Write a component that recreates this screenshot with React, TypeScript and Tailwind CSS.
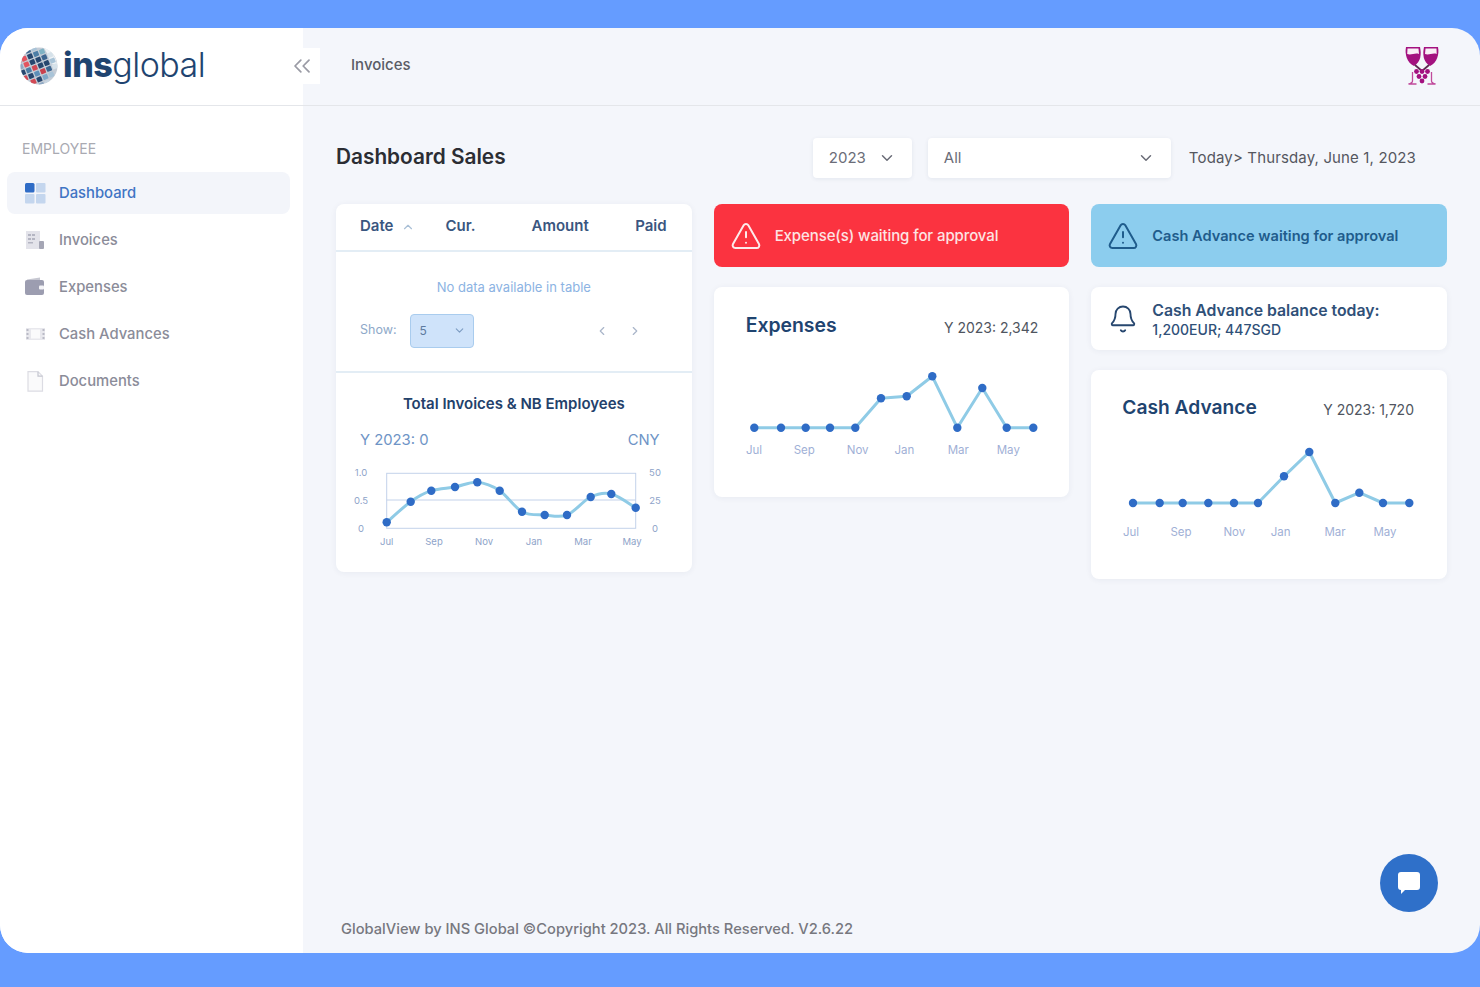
import { ChevronDown, ChevronLeft, ChevronRight, ChevronUp, ChevronsLeft, TriangleAlert, Bell } from "lucide-react";

type Pt = [number, number];
type Label = [string, number];

function smoothPath(pts: Pt[]) {
  let d = `M${pts[0][0]} ${pts[0][1]}`;
  for (let i = 0; i < pts.length - 1; i++) {
    const p0 = pts[i - 1] ?? pts[i];
    const p1 = pts[i];
    const p2 = pts[i + 1];
    const p3 = pts[i + 2] ?? p2;
    const c1x = p1[0] + (p2[0] - p0[0]) / 6;
    const c1y = p1[1] + (p2[1] - p0[1]) / 6;
    const c2x = p2[0] - (p3[0] - p1[0]) / 6;
    const c2y = p2[1] - (p3[1] - p1[1]) / 6;
    d += ` C${c1x} ${c1y} ${c2x} ${c2y} ${p2[0]} ${p2[1]}`;
  }
  return d;
}

const invoicePts: Pt[] = [[50.7, 67.3], [74.7, 46.7], [95.3, 35.7], [119, 32], [141.3, 27.3], [163.7, 35.7], [186, 56.7], [208.7, 60], [231, 60], [254.7, 42], [275.3, 39], [299.7, 52.7]];
const expensePts: Pt[] = [[40.3, 67.7], [67, 67.7], [91.7, 67.7], [116, 67.7], [141.3, 67.7], [167, 38.3], [192.7, 36.3], [218.3, 16.3], [243.3, 67.7], [268.3, 28], [292.7, 67.7], [319.3, 67.7]];
const cashPts: Pt[] = [[42, 63], [68.7, 63], [91.7, 63], [117.3, 63], [143, 63], [167, 63], [193, 36.3], [218.3, 12], [244.3, 63], [268.3, 52.7], [292, 63], [318.3, 63]];

function LineChart({ pts, labels, labelY }: { pts: Pt[]; labels: Label[]; labelY: number }) {
  return (
    <svg width="355" height="110" className="block">
      <polyline points={pts.map((p) => p.join(",")).join(" ")} fill="none" stroke="#8fcbe6" strokeWidth="3" strokeLinejoin="round" />
      {pts.map((p, i) => (
        <circle key={i} cx={p[0]} cy={p[1]} r="4.2" fill="#2f6cc6" />
      ))}
      {labels.map(([t, x]) => (
        <text key={t} x={x} y={labelY + 4} textAnchor="middle" fontSize="11.5" fill="#9fb0d6">{t}</text>
      ))}
    </svg>
  );
}

function InvoiceChart() {
  const left: [string, number][] = [["1.0", 17.3], ["0.5", 45.3], ["0", 73.3]];
  const right: [string, number][] = [["50", 17.3], ["25", 45.3], ["0", 73.3]];
  const bottom: Label[] = [["Jul", 50.7], ["Sep", 98], ["Nov", 148], ["Jan", 198], ["Mar", 247], ["May", 296]];
  return (
    <svg width="355" height="100" className="block">
      <rect x="50.7" y="18.3" width="249" height="55" fill="none" stroke="#c3d2ea" strokeWidth="1" />
      <line x1="50.7" y1="45" x2="299.7" y2="45" stroke="#c3d2ea" strokeWidth="1" />
      <path d={smoothPath(invoicePts)} fill="none" stroke="#8fcbe6" strokeWidth="3" />
      {invoicePts.map((p, i) => (
        <circle key={i} cx={p[0]} cy={p[1]} r="4.2" fill="#2f6cc6" />
      ))}
      {left.map(([t, y]) => (
        <text key={t} x="25" y={y + 3.5} textAnchor="middle" fontSize="9.5" fill="#8ea3c9">{t}</text>
      ))}
      {right.map(([t, y]) => (
        <text key={t} x="319" y={y + 3.5} textAnchor="middle" fontSize="9.5" fill="#8ea3c9">{t}</text>
      ))}
      {bottom.map(([t, x]) => (
        <text key={t} x={x} y="89.5" textAnchor="middle" fontSize="9.5" fill="#8ea3c9">{t}</text>
      ))}
    </svg>
  );
}

function Globe() {
  // tilted grid of tiles, row by row
  const rows: string[][] = [
    ["", "#d8606a", "#3d6690", "#a9c4d8", ""],
    ["#d24a55", "#e3545f", "#27476f", "#4d7ea6", "#7fb2c4"],
    ["#8fa9c4", "#e3545f", "#27476f", "#27476f", "#3d6690", "#d6e2ea"],
    ["#27476f", "#4d7ea6", "#d24a55", "#27476f", "#27476f", "#a9c4d8"],
    ["#d24a55", "#27476f", "#5d8fb8", "#c9414e", "#3d6690", "#d6e2ea"],
    ["#a9c4d8", "#d24a55", "#27476f", "#7fa8c8", "#a9c4d8", ""],
    ["", "#5d8fb8", "#8fa9c4", "#c9d6e2", "", ""],
  ];
  return (
    <svg width="38" height="38" viewBox="0 0 38 38" className="shrink-0">
      <defs>
        <clipPath id="globe-clip"><circle cx="19" cy="19" r="18.500" /></clipPath>
      </defs>
      <circle cx="19" cy="19" r="18.500" fill="#c4ccd6" />
      <path d="M24 1a18.500 18.500 0 0 1 13 17l-6-1-3-9Z" fill="#eef2f5" />
      <g clipPath="url(#globe-clip)">
        <g transform="rotate(-22 19 19)">
          {rows.map((row, r) =>
            row.map((c, i) =>
              c ? <rect key={`${r}-${i}`} x={-1 + i * 6.4} y={-2 + r * 6.2} width="5.200" height="5" rx="0.800" fill={c} /> : null
            )
          )}
        </g>
      </g>
    </svg>
  );
}

function WineIcon() {
  return (
    <svg width="36" height="39" viewBox="0 0 36 39" fill="none">
      <path d="M2 1h14c1.500 7 1 15-6 19C3 17 .5 8 2 1Z" fill="#a3117f" />
      <path d="M20 1h14c1.500 7-1 16-8 19-7-4-7.500-12-6-19Z" fill="#a3117f" />
      <path d="M3.500 2.500h11l.5 5.500c-4-1.500-8 1.500-11.800 0ZM21.500 2.500h11l.2 5.500c-4-1.500-8 1.500-11.700 0Z" fill="#f9eef6" />
      <path d="M11 19l7 6M25 19l-7 6" stroke="#5d2b52" strokeWidth="1.800" />
      <g fill="#a3117f">
        <circle cx="12.500" cy="25.500" r="2.400" /><circle cx="18" cy="25.500" r="2.400" /><circle cx="23.500" cy="25.500" r="2.400" />
        <circle cx="15" cy="30.500" r="2.400" /><circle cx="21" cy="30.500" r="2.400" /><circle cx="18" cy="35" r="2.400" />
      </g>
      <path d="M8.500 26v9c0 2-2 2.500-4 3h8M27.500 26v9c0 2 2 2.500 4 3h-8" stroke="#c04a9b" strokeWidth="1.300" />
    </svg>
  );
}

const menuIcons = {
  dashboard: (
    <svg width="21" height="21" viewBox="0 0 21 21">
      <rect width="9.500" height="9.500" rx="1.500" fill="#2f6cc6" />
      <rect x="11" width="9.500" height="9.500" rx="1" fill="#c4d6ee" />
      <rect y="11" width="9.500" height="9.500" rx="1" fill="#c4d6ee" />
      <rect x="11" y="11" width="9.500" height="9.500" rx="1" fill="#c4d6ee" />
    </svg>
  ),
  invoices: (
    <svg width="21" height="21" viewBox="0 0 21 21">
      <rect x="1" y="1" width="14" height="18" fill="#e3e3ea" />
      <path d="M3 4h3v2H3zM7 4h3v2H7zM3 8h3v2H3zM7 8h3v2H7zM3 12h5v1.500H3z" fill="#b4b5c2" />
      <rect x="14" y="11" width="5" height="8" rx="1" fill="#a5a6b5" />
    </svg>
  ),
  expenses: (
    <svg width="21" height="21" viewBox="0 0 21 21">
      <path d="M2 2.500 15 0.500v3H2Z" fill="#c6c7d1" />
      <rect y="3" width="19" height="15" rx="2" fill="#9c9db0" />
      <rect x="14" y="8.500" width="5" height="4" rx="1" fill="#f4f4f7" />
    </svg>
  ),
  cash: (
    <svg width="21" height="21" viewBox="0 0 21 21">
      <rect x="1" y="4" width="19" height="12" fill="#e8e8ed" />
      <rect x="6" y="5.500" width="9" height="9" fill="#fafafb" />
      <path d="M1.500 5h2v2h-2zM17.500 5h2v2h-2zM1.500 13h2v2h-2zM17.500 13h2v2h-2zM1.500 9h2v2h-2zM17.500 9h2v2h-2z" fill="#b9bac6" />
    </svg>
  ),
  documents: (
    <svg width="21" height="21" viewBox="0 0 21 21" fill="none">
      <path d="M3 .7h10l4.500 4.500v15H3Z" fill="#fafafb" stroke="#dcdce3" strokeWidth="1.200" />
      <path d="M13 .7v4.500h4.500" stroke="#c4c5cf" strokeWidth="1.200" />
    </svg>
  ),
};

function MenuItem({ icon, label, active }: { icon: React.ReactNode; label: string; active?: boolean }) {
  return (
    <div className={active ? "flex h-[42px] items-center gap-[13px] rounded-lg bg-[#f3f5fa] pl-[18px]" : "flex h-[42px] items-center gap-[13px] pl-[18px]"}>
      <span className="flex w-[21px] items-center justify-center">{icon}</span>
      <span className={active ? "text-[14.8px] font-medium text-[#3f74c4]" : "text-[14.8px] font-medium text-[#8b8c99]"}>{label}</span>
    </div>
  );
}

function Select({ label, width }: { label: string; width: string }) {
  return (
    <div className={`flex h-10 items-center justify-between rounded bg-white pl-[16px] pr-[16px] shadow-[0_1px_4px_rgba(30,50,90,0.08)] ${width}`}>
      <span className="text-[15px] text-[#6b6d78]">{label}</span>
      <ChevronDown size={18} className="text-[#6b6d78]" />
    </div>
  );
}

export default function App() {
  return (
    <div className="h-[987px] overflow-hidden bg-[#659cff] py-[28px] font-['Inter',sans-serif]">
      <div className="relative flex h-[925px] flex-col overflow-hidden rounded-[28px] bg-[#f4f6fb]">
        {/* top bar */}
        <div className="flex h-[78px] shrink-0 items-center border-b border-[#e4e6ea]">
          <div className="flex h-full w-[303px] items-center bg-white pb-[2px] pl-[20px]">
            <Globe />
            <div className="ml-[5px] pb-[2px] text-[34px] leading-none tracking-[-0.5px] text-[#1f4470]">
              <span className="font-extrabold">ins</span>
              <span className="font-light">global</span>
            </div>
          </div>
          <div className="-ml-[20px] mb-[2px] flex h-[36px] w-[37px] items-center justify-center bg-white">
            <ChevronsLeft size={28} strokeWidth={1.5} className="text-[#9a9ba5]" />
          </div>
          <span className="mb-[2px] ml-[31px] text-[15px] font-medium text-[#5a5c66]">Invoices</span>
          <div className="mb-[2px] ml-auto mr-[40px]">
            <WineIcon />
          </div>
        </div>

        <div className="flex min-h-0 flex-1">
          {/* sidebar */}
          <div className="w-[303px] shrink-0 bg-white pl-[7px] pr-[13px] pt-[34px]">
            <div className="pl-[15px] text-[14px] leading-[17px] text-[#a9aab2]">EMPLOYEE</div>
            <div className="mt-[15px] flex flex-col gap-[5px]">
              <MenuItem icon={menuIcons.dashboard} label="Dashboard" active />
              <MenuItem icon={menuIcons.invoices} label="Invoices" />
              <MenuItem icon={menuIcons.expenses} label="Expenses" />
              <MenuItem icon={menuIcons.cash} label="Cash Advances" />
              <MenuItem icon={menuIcons.documents} label="Documents" />
            </div>
          </div>

          {/* main */}
          <div className="flex min-w-0 flex-1 flex-col pb-[13px] pl-[33px] pr-[33px] pt-[32px]">
            <div className="flex h-[40px] items-center">
              <h1 className="pb-[2px] text-[20.8px] font-semibold text-[#2b2d33]">Dashboard Sales</h1>
              <div className="ml-auto flex items-center">
                <Select label="2023" width="w-[99px]" />
                <div className="w-[16px]" />
                <Select label="All" width="w-[243px]" />
                <span className="ml-[18px] mr-[31px] text-[15px] tracking-[0.14px] text-[#55575f]">Today&gt; Thursday, June 1, 2023</span>
              </div>
            </div>

            <div className="mt-[26px] grid grid-cols-3 items-start gap-[22px]">
              {/* table column */}
              <div className="rounded-lg bg-white shadow-[0_1px_6px_rgba(30,50,90,0.06)]">
                <div className="flex h-[48px] items-center border-b-2 border-[#e3edf5] pb-[1px] pl-[24px] pr-[25px] text-[15px] font-semibold text-[#3a5680]">
                  <span>Date</span>
                  <ChevronUp size={14} className="ml-[8px] text-[#a9bfd6]" />
                  <span className="ml-[30px]">Cur.</span>
                  <span className="ml-[56px]">Amount</span>
                  <span className="ml-auto">Paid</span>
                </div>
                <div className="h-[121px] border-b-2 border-[#e3edf5]">
                  <p className="pt-[26px] text-center text-[13px] text-[#8cb3e3]">No data available in table</p>
                  <div className="mt-[16px] flex items-center pl-[24px]">
                    <span className="text-[12.5px] text-[#8ea9c9]">Show:</span>
                    <div className="ml-[13px] flex h-[34px] w-[64px] items-center justify-between rounded border border-[#a9ccee] bg-[#cfe3fa] pl-[9px] pr-[7px] text-[12px] text-[#5e7ba0]">
                      5
                      <ChevronDown size={13} className="text-[#7c9cc2]" />
                    </div>
                    <ChevronLeft size={14} className="ml-[121px] text-[#a9b5c9]" />
                    <ChevronRight size={14} className="ml-[19px] text-[#a9b5c9]" />
                  </div>
                </div>
                <div className="h-[199px]">
                  <h3 className="pt-[20px] text-center text-[15px] font-semibold leading-[22px] text-[#23416b]">Total Invoices &amp; NB Employees</h3>
                  <div className="mt-[15px] flex items-center justify-between pl-[24px] pr-[32px] text-[14.8px] leading-[20px] text-[#6e94c6]">
                    <span>Y 2023: 0</span>
                    <span>CNY</span>
                  </div>
                  <div className="mt-[5px]">
                    <InvoiceChart />
                  </div>
                </div>
              </div>

              {/* expenses column */}
              <div className="flex flex-col gap-[20px]">
                <div className="flex h-[63px] items-center rounded-lg bg-[#fb3340] pl-[16px] text-[15px] font-medium tracking-[-0.1px] text-[#fde3e3]">
                  <TriangleAlert size={32} strokeWidth={1.5} className="text-[#fdeaea]" />
                  <span className="ml-[13px] pt-[2px]">Expense(s) waiting for approval</span>
                </div>
                <div className="h-[210px] rounded-lg bg-white shadow-[0_1px_6px_rgba(30,50,90,0.06)]">
                  <div className="flex items-center justify-between pl-[32px] pr-[31px] pt-[25px]">
                    <span className="text-[19.4px] font-semibold leading-[26px] text-[#1f4470]">Expenses</span>
                    <span className="pt-[4px] text-[14px] text-[#4f5560]">Y 2023: 2,342</span>
                  </div>
                  <div className="mt-[22px]">
                    <LineChart pts={expensePts} labelY={90} labels={[["Jul", 40], ["Sep", 90.3], ["Nov", 143.7], ["Jan", 190.3], ["Mar", 244.3], ["May", 294.3]]} />
                  </div>
                </div>
              </div>

              {/* cash advance column */}
              <div className="flex flex-col gap-[20px]">
                <div className="flex h-[63px] items-center rounded-lg bg-[#8ccdee] pl-[16px] text-[14.6px] font-semibold text-[#1f5c8c]">
                  <TriangleAlert size={32} strokeWidth={1.5} className="text-[#1f5c8c]" />
                  <span className="ml-[13px] pt-[2px]">Cash Advance waiting for approval</span>
                </div>
                <div className="flex h-[63px] items-center rounded-lg bg-white pl-[17px] shadow-[0_1px_6px_rgba(30,50,90,0.06)]">
                  <Bell size={30} strokeWidth={1.5} className="text-[#27476f]" />
                  <div className="ml-[14px] pt-[2px] text-[15.8px] font-semibold leading-[19px] text-[#2f5078]">
                    Cash Advance balance today:
                    <div className="text-[14px] font-medium">1,200EUR; 447SGD</div>
                  </div>
                </div>
                <div className="h-[209px] rounded-lg bg-white shadow-[0_1px_6px_rgba(30,50,90,0.06)]">
                  <div className="flex items-center justify-between pl-[31px] pr-[33px] pt-[24px]">
                    <span className="text-[19.2px] font-semibold leading-[26px] text-[#1f4470]">Cash Advance</span>
                    <span className="pt-[4px] text-[14px] text-[#4f5560]">Y 2023: 1,720</span>
                  </div>
                  <div className="mt-[20px]">
                    <LineChart pts={cashPts} labelY={92.3} labels={[["Jul", 40], ["Sep", 90], ["Nov", 143.3], ["Jan", 189.7], ["Mar", 244], ["May", 294]]} />
                  </div>
                </div>
              </div>
            </div>

            <div className="mt-auto pl-[5px] text-[14.7px] font-medium text-[#77787f]">GlobalView by INS Global ©Copyright 2023. All Rights Reserved. V2.6.22</div>
          </div>
        </div>

        {/* chat bubble */}
        <div className="absolute bottom-[41px] right-[42px] flex h-[58px] w-[58px] items-center justify-center rounded-full bg-[#2f70c9]">
          <svg width="24" height="22" viewBox="0 0 24 22">
            <path d="M4 0h16a3 3 0 0 1 3 3v12a3 3 0 0 1-3 3H8l-4 4v-4a3 3 0 0 1-3-3V3a3 3 0 0 1 3-3Z" fill="#fff" />
          </svg>
        </div>
      </div>
    </div>
  );
}
